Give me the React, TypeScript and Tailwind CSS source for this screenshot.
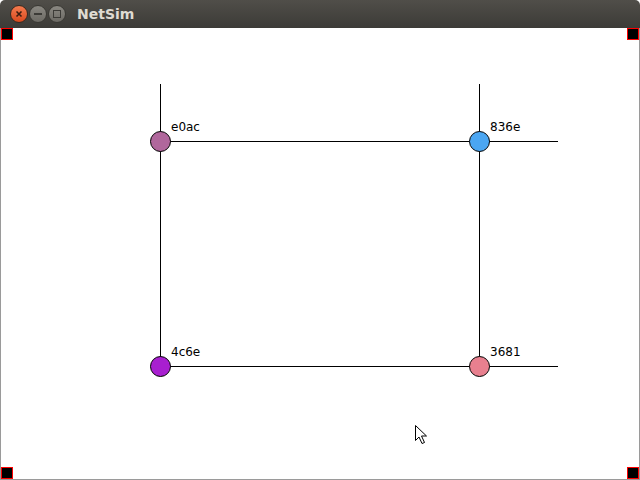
import React from "react";

const nodes = [
  { x: 160, y: 141, c: "#b0679c", label: "e0ac" },
  { x: 479, y: 141, c: "#4ba6f2", label: "836e" },
  { x: 160, y: 366, c: "#a81fd0", label: "4c6e" },
  { x: 479, y: 366, c: "#e8808f", label: "3681" },
];

function Corner({ pos }: { pos: string }) {
  return <div className={`absolute w-[12px] h-[12px] bg-black border border-[#ff0000] ${pos}`} />;
}

export default function App() {
  return (
    <div className="w-[640px] h-[480px] flex flex-col overflow-hidden bg-white" style={{ fontFamily: "'DejaVu Sans', sans-serif" }}>
      <div className="h-[28px] shrink-0 flex items-center bg-gradient-to-b from-[#504e49] to-[#3c3b37] rounded-t-[5px]">
        <div className="flex items-center gap-[1px] pl-[10px]">
          <div className="w-[18px] h-[18px] rounded-full bg-gradient-to-b from-[#f47b4e] to-[#d9481c] border border-[#3a2a20] flex items-center justify-center">
            <svg width="8" height="8" viewBox="0 0 8 8"><path d="M1.5 1.5 L6.5 6.5 M6.5 1.5 L1.5 6.5" stroke="#3b1d10" strokeWidth="1.6" /></svg>
          </div>
          <div className="w-[18px] h-[18px] rounded-full bg-gradient-to-b from-[#8a8882] to-[#6c6a64] border border-[#3a3934] flex items-center justify-center">
            <div className="w-[8px] h-[2px] bg-[#3c3b37]" />
          </div>
          <div className="w-[18px] h-[18px] rounded-full bg-gradient-to-b from-[#8a8882] to-[#6c6a64] border border-[#3a3934] flex items-center justify-center">
            <div className="w-[8px] h-[8px] border-[1.5px] border-[#3c3b37]" />
          </div>
        </div>
        <div className="ml-[11px] text-[14px] font-bold text-[#dfdbd2] leading-none">NetSim</div>
      </div>
      <div className="relative flex-1 border-x border-b border-[#9a9a9a] bg-white">
        <Corner pos="left-0 top-0" />
        <Corner pos="right-0 top-0" />
        <Corner pos="left-0 bottom-0" />
        <Corner pos="right-0 bottom-0" />
        <svg className="absolute left-[-1px] top-[-28px]" width="640" height="480" viewBox="0 0 640 480">
          <g stroke="#000" strokeWidth="1" shapeRendering="crispEdges">
            <line x1="160.5" y1="84" x2="160.5" y2="366" />
            <line x1="479.5" y1="84" x2="479.5" y2="366" />
            <line x1="160" y1="141.5" x2="558" y2="141.5" />
            <line x1="160" y1="366.5" x2="558" y2="366.5" />
          </g>
          {nodes.map((n) => (
            <g key={n.label}>
              <circle cx={n.x + 0.5} cy={n.y + 0.5} r="10" fill={n.c} stroke="#000" strokeWidth="1" />
              <text x={n.x + 11} y={n.y - 10} fontSize="12" fontFamily="'DejaVu Sans', sans-serif" fill="#000">{n.label}</text>
            </g>
          ))}
          <path d="M415.5 425.5 L415.5 440.5 L419 437 L422 443.5 L424.5 442.5 L421.5 436 L426.5 436 Z" fill="#fff" stroke="#000" strokeWidth="1" strokeLinejoin="round" />
        </svg>
      </div>
    </div>
  );
}
